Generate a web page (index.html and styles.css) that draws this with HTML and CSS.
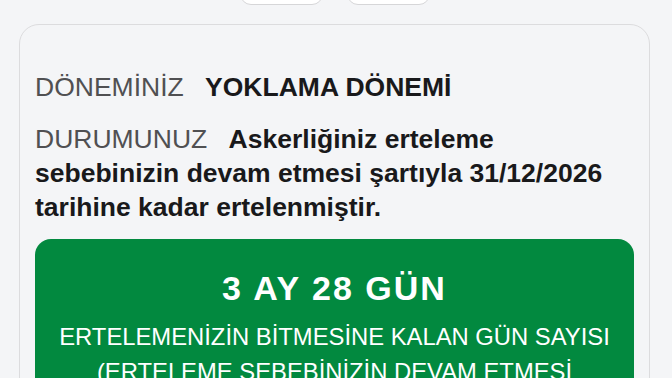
FILE: index.html
```html
<!DOCTYPE html>
<html lang="tr">
	<head>
		<meta charset="utf-8" />
		<title>Askerlik Durum Belgesi</title>
		<link rel="stylesheet" href="styles.css">
	</head>
	<body>
		<div class="wrap">
			<div class="tabs">
				<span class="tab"></span>
				<span class="tab"></span>
			</div>
			<div class="card">
				<p class="row"><span class="label">DÖNEMİNİZ</span> <b class="value">YOKLAMA DÖNEMİ</b></p>
				<p class="row"><span class="label">DURUMUNUZ</span> <b class="value">Askerliğiniz erteleme sebebinizin devam etmesi şartıyla 31/12/2026 tarihine kadar ertelenmiştir.</b></p>
				<div class="remain">
					<div class="remain_num">3 AY 28 GÜN</div>
					<div class="remain_tx">ERTELEMENİZİN BİTMESİNE KALAN GÜN SAYISI (ERTELEME SEBEBİNİZİN DEVAM ETMESİ ŞARTIYLA)</div>
				</div>
			</div>
		</div>
	</body>
</html>
```

FILE: styles.css
```css
body,p,div{padding:0;margin:0;}
body{background:#f4f5f7;font-family:"Liberation Sans",Arial,sans-serif;overflow:hidden;}
.wrap{width:631px;margin-left:19px;}
.tabs{display:flex;justify-content:center;gap:24px;margin-top:-36px;}
.tab{display:block;width:81px;height:39px;background:#fff;border:1.5px solid #d6d6d8;border-radius:11px;}
.card{margin-top:19px;border:1.5px solid #dcdcde;border-radius:20px;padding:45px 15px 40px 15px;height:400px;}
.row{font-size:26.5px;line-height:34px;color:#19191b;margin-bottom:18px;}
.row .label{color:#505052;margin-right:14px;}
.row .value{font-weight:bold;}
.row:last-of-type{margin-bottom:15px;}
.remain{background:#02893f;border-radius:16px;padding:29px 14px 20px 14px;text-align:center;color:#fff;}
.remain_num{font-size:34px;line-height:40px;font-weight:bold;letter-spacing:2px;}
.remain_tx{font-size:23.8px;line-height:35px;margin-top:11px;}
```
